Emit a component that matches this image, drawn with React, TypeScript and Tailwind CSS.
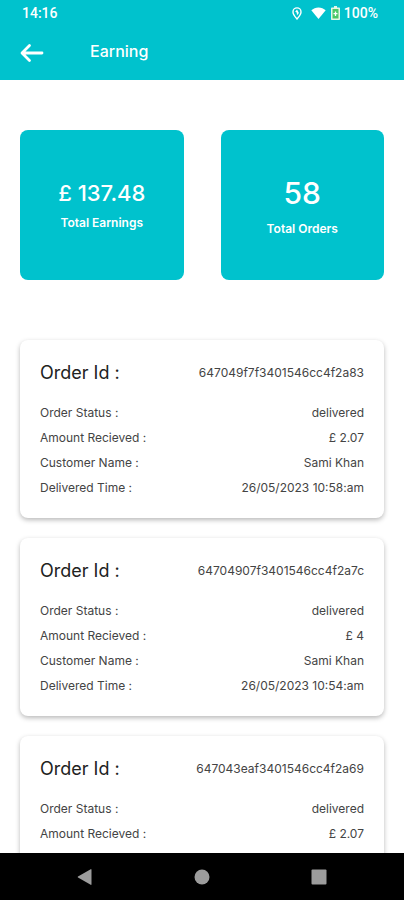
import React from 'react';

interface Order {
  id: string;
  status: string;
  amount: string;
  customer: string;
  time: string;
}

const orders: Order[] = [
  {
    id: '647049f7f3401546cc4f2a83',
    status: 'delivered',
    amount: '£ 2.07',
    customer: 'Sami Khan',
    time: '26/05/2023 10:58:am',
  },
  {
    id: '64704907f3401546cc4f2a7c',
    status: 'delivered',
    amount: '£ 4',
    customer: 'Sami Khan',
    time: '26/05/2023 10:54:am',
  },
  {
    id: '647043eaf3401546cc4f2a69',
    status: 'delivered',
    amount: '£ 2.07',
    customer: '',
    time: '',
  },
];

const StatusBar: React.FC = () => (
  <div className="flex h-[26px] items-center justify-between pl-[22px] pr-[26px] font-['Roboto',sans-serif] text-[14px] font-medium">
    <span>14:16</span>
    <div className="flex items-center">
      <svg className="mr-[9px] h-[13px] w-[10px]" viewBox="0 0 10 13" fill="none" stroke="currentColor">
        <path d="M5 12C3.2 9.8 1 7.4 1 4.9a4 4 0 0 1 8 0C9 7.4 6.8 9.8 5 12Z" strokeWidth="1.4" />
        <path d="M5 2.4 6.9 6 5 8.200 4.700 5.600 3.200 4.800Z" fill="currentColor" stroke="none" />
      </svg>
      <svg className="mr-[5px] h-[12px] w-[15px]" viewBox="0 0 15 12" fill="currentColor">
        <path d="M7.5 12 .3 3.3C2.3 1.4 4.8.4 7.5.4s5.2 1 7.2 2.9Z" />
      </svg>
      <svg className="mr-1 h-[14px] w-[9px]" viewBox="0 0 9 14">
        <path d="M3 0h3v1.5h2.2a.8.8 0 0 1 .8.8v10.9a.8.8 0 0 1-.8.8H.8a.8.8 0 0 1-.8-.8V2.3a.8.8 0 0 1 .8-.8H3Z" fill="#e4f7e6" />
        <path d="M1.5 3h6v9.500h-6Z" fill="#4cc868" />
        <path d="M4.5 5.500v4.500M2.500 7.700h4" stroke="#fff" strokeWidth="1.3" />
      </svg>
      <span>100%</span>
    </div>
  </div>
);

const Row: React.FC<{ label: string; value: string }> = ({ label, value }) => (
  <div className="flex items-center justify-between text-[12px] leading-[25px] text-[#444]">
    <dt>{label} :</dt>
    <dd>{value}</dd>
  </div>
);

const OrderCard: React.FC<{ order: Order }> = ({ order }) => (
  <li className="rounded-lg bg-white px-5 pt-5 pb-[18px] shadow-[0_2px_5px_rgba(0,0,0,0.28)]">
    <div className="mb-[14px] flex items-center justify-between leading-[26px]">
      <h2 className="text-[18px] text-[#222]">Order Id :</h2>
      <span className="text-[12px] text-[#444]">{order.id}</span>
    </div>
    <dl>
      <Row label="Order Status" value={order.status} />
      <Row label="Amount Recieved" value={order.amount} />
      {order.customer && <Row label="Customer Name" value={order.customer} />}
      {order.time && <Row label="Delivered Time" value={order.time} />}
    </dl>
  </li>
);

const App: React.FC = () => {
  return (
    <div className="flex h-screen flex-col bg-white font-['Inter',sans-serif]">
      <header className="shrink-0 bg-[#00c2cd] text-white">
        <StatusBar />
        <div className="flex h-[54px] items-center px-5">
          <button aria-label="Back" className="h-6 w-6">
            <svg className="h-6 w-6" viewBox="0 0 24 24" fill="none" stroke="currentColor" strokeWidth="2.8" strokeLinecap="round" strokeLinejoin="round">
              <path d="M22 12H2.5M9.5 4.500 2 12l7.500 7.500" />
            </svg>
          </button>
          <h1 className="ml-[46px] pb-1 text-[16px] font-medium">Earning</h1>
        </div>
      </header>

      <main className="flex-1 overflow-y-auto px-5 pt-[50px] [scrollbar-width:none]">
        <section className="grid grid-cols-2 gap-[37px] text-center text-white">
          <div className="flex h-[150px] flex-col justify-center rounded-lg bg-[#00c2cd]">
            <p className="text-[22px] leading-9 font-medium">£ 137.48</p>
            <p className="text-[12px] leading-6 font-semibold">Total Earnings</p>
          </div>
          <div className="flex h-[150px] flex-col justify-center rounded-lg bg-[#00c2cd]">
            <p className="text-[30px] leading-[48px] font-medium">58</p>
            <p className="text-[12px] leading-6 font-semibold">Total Orders</p>
          </div>
        </section>

        <ul className="mt-[60px] flex flex-col gap-5">
          {orders.map((order) => (
            <OrderCard key={order.id} order={order} />
          ))}
        </ul>
      </main>

      <nav className="flex h-[47px] shrink-0 items-center justify-around bg-black px-[26px] text-[#9c9c9c]">
        <button aria-label="Back">
          <svg className="h-4 w-4" viewBox="0 0 16 16" fill="currentColor">
            <path d="M14.5.6v14.8a.5.5 0 0 1-.8.4L1 8.5a.6.6 0 0 1 0-1L13.7.2a.5.5 0 0 1 .8.4Z" />
          </svg>
        </button>
        <button aria-label="Home">
          <svg className="h-4 w-4" viewBox="0 0 16 16" fill="currentColor">
            <circle cx="8" cy="8" r="7.5" />
          </svg>
        </button>
        <button aria-label="Recent apps">
          <svg className="h-4 w-4" viewBox="0 0 16 16" fill="currentColor">
            <rect x=".5" y=".5" width="15" height="15" rx="1" />
          </svg>
        </button>
      </nav>
    </div>
  );
};

export default App;
